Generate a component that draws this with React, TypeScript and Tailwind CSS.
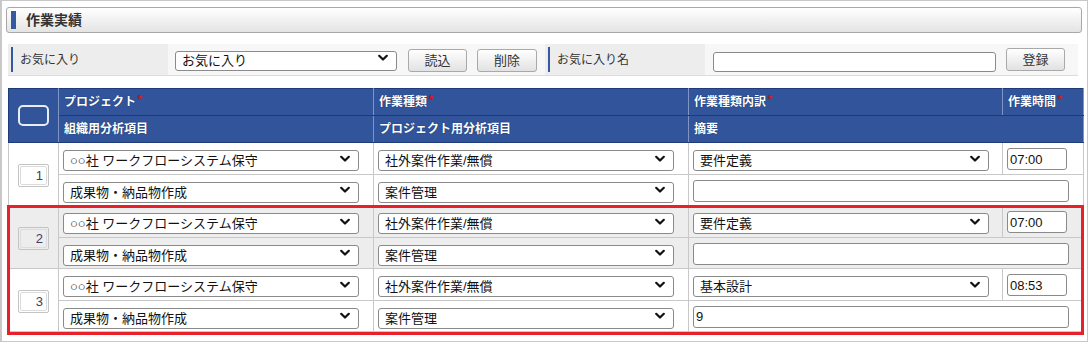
import React from 'react';

const FONT = "font-['Liberation_Sans','Noto_Sans_CJK_JP',sans-serif]";

type Row = {
  no: number;
  project: string;
  work: string;
  detail: string;
  time: string;
  org: string;
  pj: string;
  memo: string;
  shaded?: boolean;
};

const rows: Row[] = [
  { no: 1, project: '○○社 ワークフローシステム保守', work: '社外案件作業/無償', detail: '要件定義', time: '07:00', org: '成果物・納品物作成', pj: '案件管理', memo: '' },
  { no: 2, project: '○○社 ワークフローシステム保守', work: '社外案件作業/無償', detail: '要件定義', time: '07:00', org: '成果物・納品物作成', pj: '案件管理', memo: '', shaded: true },
  { no: 3, project: '○○社 ワークフローシステム保守', work: '社外案件作業/無償', detail: '基本設計', time: '08:53', org: '成果物・納品物作成', pj: '案件管理', memo: '9' },
];

function Select({ value, className }: { value: string; className: string }) {
  return (
    <div className={`relative ${className}`}>
      <select
        defaultValue={value}
        className={`appearance-none w-full h-full bg-white border border-[#8a8a8a] rounded-[3px] pl-[6px] pr-6 text-[13px] leading-none text-[#111] outline-none ${FONT}`}
      >
        <option>{value}</option>
      </select>
      <svg className="absolute right-[9px] top-1/2 -translate-y-1/2 pointer-events-none" width="10" height="7" viewBox="0 0 10 7">
        <path d="M1.2 1.2 5 5 8.8 1.2" fill="none" stroke="#111" strokeWidth="2.2" strokeLinecap="round" strokeLinejoin="round" />
      </svg>
    </div>
  );
}

function Button({ label, className = '' }: { label: string; className?: string }) {
  return (
    <button className={`h-[23px] w-[59px] rounded-[3px] border border-[#a9a9a9] bg-gradient-to-b from-white to-[#e2e2e2] text-[13px] text-[#333] ${className}`}>
      {label}
    </button>
  );
}

function Label({ text }: { text: string }) {
  return (
    <div className="w-[160px] h-full bg-[#ededed] flex items-center py-[3px] pl-[3px]">
      <div className="w-[2px] h-full bg-[#3558a0]" />
      <span className="ml-[7px] text-[12px] text-[#333]">{text}</span>
    </div>
  );
}

function Req() {
  return <span className="text-[#e0202a] text-[11px] ml-[2px] relative -top-[3px]">*</span>;
}

function DataRow({ r }: { r: Row }) {
  const bg = r.shaded ? 'bg-[#ededed]' : 'bg-white';
  const td = 'border border-[#c8c8c8] p-0 align-middle';
  return (
    <>
      <tr className={`${bg} h-[32px]`}>
        <td rowSpan={2} className="border border-[#c8c8c8] p-0 align-middle">
          <div className="mx-auto w-[31px] h-[23px] border border-[#c4c4c4] rounded-[2px] p-[1px] mt-[2px]">
            <div className="w-full h-full border border-[#dcdcdc] rounded-[2px] flex items-center justify-end pr-[3px] text-[13px] leading-none text-[#4a3a5a]">
              {r.no}
            </div>
          </div>
        </td>
        <td className={td}>
          <Select value={r.project} className="ml-[4px] w-[296px] h-[21px]" />
        </td>
        <td className={td}>
          <Select value={r.work} className="ml-[4px] w-[296px] h-[21px]" />
        </td>
        <td className={td}>
          <Select value={r.detail} className="ml-[4px] w-[296px] h-[21px]" />
        </td>
        <td className={td}>
          <input
            defaultValue={r.time}
            className={`ml-[4px] w-[60px] h-[22px] bg-white border border-[#8a8a8a] rounded-[3px] px-[2px] text-[13px] text-[#111] outline-none ${FONT}`}
          />
        </td>
      </tr>
      <tr className={`${bg} h-[31px]`}>
        <td className={td}>
          <Select value={r.org} className="ml-[4px] w-[296px] h-[21px]" />
        </td>
        <td className={td}>
          <Select value={r.pj} className="ml-[4px] w-[296px] h-[21px]" />
        </td>
        <td colSpan={2} className={td}>
          <input
            defaultValue={r.memo}
            className={`ml-[4px] w-[376px] h-[22px] bg-white border border-[#8a8a8a] rounded-[3px] px-[2px] text-[13px] text-[#111] outline-none ${FONT}`}
          />
        </td>
      </tr>
    </>
  );
}

export default function App() {
  const th = 'border border-[#1f3a78] border-x-[#7f95c6] h-[27px] px-[5px] text-left align-middle text-[12px] font-bold text-white';
  return (
    <div className={`w-[1088px] h-[342px] bg-white border border-l-2 border-[#c8c8c8] pt-[6px] pl-[4px] pr-[5px] ${FONT}`}>
      <div className="h-[26px] border border-[#a8a8a8] rounded-[3px] bg-gradient-to-b from-white to-[#e4e4e4] flex items-center pl-[4px]">
        <div className="w-[5px] h-[18px] bg-[#3558a0]" />
        <span className="ml-[10px] text-[14px] font-bold text-[#333]">作業実績</span>
      </div>

      <div className="mt-[11px] ml-[2px] mr-[4px] h-[32px] flex gap-[2px] border-b border-[#dcdcdc] bg-[#f7f7f7]">
        <Label text="お気に入り" />
        <div className="w-[373px] h-full flex items-start pl-[5px] bg-[#f7f7f7]">
          <Select value="お気に入り" className="mt-[4px] w-[222px] h-[20px]" />
          <Button label="読込" className="mt-[5px] ml-[11px]" />
          <Button label="削除" className="mt-[5px] ml-[10px] w-[60px]" />
        </div>
        <Label text="お気に入り名" />
        <div className="flex-1 h-full flex items-start pl-[6px]">
          <input className="mt-[8px] w-[283px] h-[20px] bg-white border border-[#8a8a8a] rounded-[3px] outline-none" />
          <Button label="登録" className="mt-[4px] ml-[10px]" />
        </div>
      </div>

      <div className="relative mt-[12px] ml-[2px]">
        <table className="border-collapse table-fixed w-[1075px] border border-[#c8c8c8]">
          <colgroup>
            <col className="w-[50px]" />
            <col className="w-[315px]" />
            <col className="w-[315px]" />
            <col className="w-[314px]" />
            <col className="w-[81px]" />
          </colgroup>
          <thead className="bg-[#31549b] [text-shadow:0_0_1px_#0b1e4a]">
            <tr>
              <th rowSpan={2} className="border border-[#1f3a78] border-r-[#7f95c6] p-0 align-middle">
                <div className="mx-auto w-[31px] h-[21px] border-2 border-[#e8ecf5] rounded-[5px]" />
              </th>
              <th className={th}>プロジェクト<Req /></th>
              <th className={th}>作業種類<Req /></th>
              <th className={th}>作業種類内訳<Req /></th>
              <th className={th}>作業時間<Req /></th>
            </tr>
            <tr>
              <th className={th}>組織用分析項目</th>
              <th className={th}>プロジェクト用分析項目</th>
              <th colSpan={2} className={th}>摘要</th>
            </tr>
          </thead>
          <tbody>
            {rows.map((r) => (
              <DataRow key={r.no} r={r} />
            ))}
          </tbody>
        </table>
        <div className="absolute left-[-1px] right-[-2px] top-[117px] bottom-[-3px] border-[3px] border-[#e8202a] pointer-events-none" />
      </div>
    </div>
  );
}
